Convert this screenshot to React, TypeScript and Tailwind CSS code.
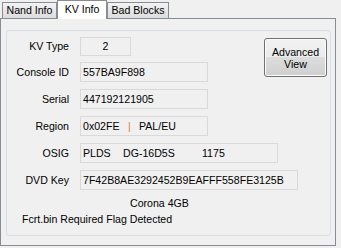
import type { ReactNode } from "react";

// KV Info tab of the nand tool: read-only fields inside a group box.

function Tab({ label, selected, w }: { label: string; selected?: boolean; w: string }) {
  if (selected) {
    return (
      <div
        className={`${w} relative z-10 -mb-px flex h-[19px] justify-center border border-b-0 border-[#898c95] bg-white pt-[2px]`}
      >
        {label}
      </div>
    );
  }
  return (
    <div
      className={`${w} flex h-[16px] items-center justify-center border border-b-0 border-[#898c95] bg-linear-to-b from-[#f3f3f3] to-[#dcdcdc]`}
    >
      {label}
    </div>
  );
}

function Field({ label, w, h = "h-[20px]", children, center }: {
  label: string;
  w: string;
  h?: string;
  children: ReactNode;
  center?: boolean;
}) {
  return (
    <div className="flex items-center">
      <div className="w-[62px] shrink-0 text-right">{label}</div>
      <div
        className={`${w} ${h} ml-[11px] flex items-center border border-[#d9d9d9] bg-[#f0f0f0] ${
          center ? "justify-center" : "pl-[2px]"
        }`}
      >
        {children}
      </div>
    </div>
  );
}

export default function App() {
  return (
    <div className="h-[248px] w-[341px] overflow-hidden bg-[#f0f0f0] font-['Liberation_Sans',Arial,sans-serif] text-[10.6px] leading-[13px] text-black">
      <div className="flex h-[18px] items-end pl-[2px]">
        <Tab label="Nand Info" w="w-[55px]" />
        <Tab label="KV Info" w="w-[50px]" selected />
        <Tab label="Bad Blocks" w="w-[62px]" />
      </div>

      <div className="h-[228px] w-[336px] border border-[#898c95] pl-[5px] pt-[11px]">
        <div className="h-[206px] w-[325px] rounded-[3px] border border-[#d5dfe5] pt-[6px]">
          <div className="flex">
            <div className="flex flex-col gap-[6px]">
              <Field label="KV Type" w="w-[51px]" h="h-[19px]" center>
                2
              </Field>
              <Field label="Console ID" w="w-[128px]">
                557BA9F898
              </Field>
            </div>
            <button
              type="button"
              className="ml-auto mr-[3px] mt-[1px] flex h-[39px] w-[63px] flex-col items-center justify-center rounded-[3px] border border-[#707070] bg-[linear-gradient(#f2f2f2,#ebebeb_50%,#dddddd_50%,#cfcfcf)] leading-[12px] shadow-[inset_0_0_0_1px_#fcfcfc]"
            >
              <span>Advanced</span>
              <span>View</span>
            </button>
          </div>

          <div className="mt-[7px] flex flex-col gap-[7px]">
            <Field label="Serial" w="w-[128px]">
              447192121905
            </Field>
            <Field label="Region" w="w-[128px]">
              <span className="w-[45px]">0x02FE</span>
              <span className="w-[11px] text-[#e07b1f]">|</span>
              <span>PAL/EU</span>
            </Field>
            <Field label="OSIG" w="w-[198px]">
              <span className="w-[40px]">PLDS</span>
              <span className="w-[79px]">DG-16D5S</span>
              <span>1175</span>
            </Field>
            <Field label="DVD Key" w="w-[218px]">
              7F42B8AE3292452B9EAFFF558FE3125B
            </Field>
          </div>

          <div className="mt-[7px] pl-[123px]">Corona 4GB</div>
          <div className="mt-[3px] pl-[15px]">Fcrt.bin Required Flag Detected</div>
        </div>
      </div>
    </div>
  );
}
